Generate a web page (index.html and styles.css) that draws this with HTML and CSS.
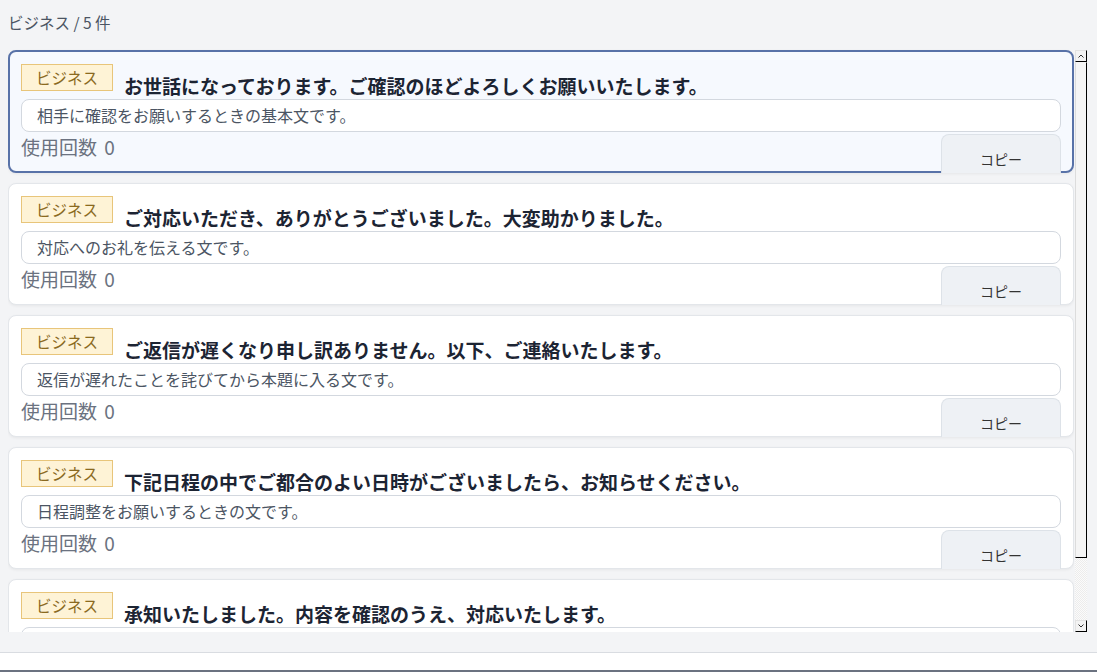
FILE: index.html
```html
<!doctype html>
<html lang="ja">
<head>
  <meta charset="UTF-8">
  <meta name="viewport" content="width=device-width, initial-scale=1.0">
  <title>テンプレート一覧</title>
  <link rel="stylesheet" href="styles.css">
</head>
<body>
  <div class="page">
    <div class="crumb">ビジネス / 5 件</div>

    <div class="viewport">
      <div class="list">
        <div class="card card-active">
          <div class="card-head">
            <span class="tag">ビジネス</span>
            <h3 class="title">お世話になっております。ご確認のほどよろしくお願いいたします。</h3>
          </div>
          <div class="note">相手に確認をお願いするときの基本文です。</div>
          <div class="card-foot">
            <span class="count">使用回数 0</span>
            <button class="copy">コピー</button>
          </div>
        </div>

        <div class="card">
          <div class="card-head">
            <span class="tag">ビジネス</span>
            <h3 class="title">ご対応いただき、ありがとうございました。大変助かりました。</h3>
          </div>
          <div class="note">対応へのお礼を伝える文です。</div>
          <div class="card-foot">
            <span class="count">使用回数 0</span>
            <button class="copy">コピー</button>
          </div>
        </div>

        <div class="card">
          <div class="card-head">
            <span class="tag">ビジネス</span>
            <h3 class="title">ご返信が遅くなり申し訳ありません。以下、ご連絡いたします。</h3>
          </div>
          <div class="note">返信が遅れたことを詫びてから本題に入る文です。</div>
          <div class="card-foot">
            <span class="count">使用回数 0</span>
            <button class="copy">コピー</button>
          </div>
        </div>

        <div class="card">
          <div class="card-head">
            <span class="tag">ビジネス</span>
            <h3 class="title">下記日程の中でご都合のよい日時がございましたら、お知らせください。</h3>
          </div>
          <div class="note">日程調整をお願いするときの文です。</div>
          <div class="card-foot">
            <span class="count">使用回数 0</span>
            <button class="copy">コピー</button>
          </div>
        </div>

        <div class="card">
          <div class="card-head">
            <span class="tag">ビジネス</span>
            <h3 class="title">承知いたしました。内容を確認のうえ、対応いたします。</h3>
          </div>
          <div class="note"></div>
        </div>
      </div>

      <!-- drawn scrollbar, list is scrolled to the top -->
      <div class="scrollbar">
        <div class="sb-btn">
          <svg width="6" height="4" viewBox="0 0 6 4"><path d="M0.5 3.5 L3 1 L5.5 3.5" fill="none" stroke="#333" stroke-width="1"/></svg>
        </div>
        <div class="sb-thumb"></div>
        <div class="sb-track"></div>
        <div class="sb-btn">
          <svg width="6" height="4" viewBox="0 0 6 4"><path d="M0.5 0.5 L3 3 L5.5 0.5" fill="none" stroke="#333" stroke-width="1"/></svg>
        </div>
      </div>
    </div>

    <div class="footer"></div>
  </div>
</body>
</html>
```

FILE: styles.css
```css
* {
  box-sizing: border-box;
}

body {
  margin: 0;
  background: #f3f4f6;
  font-family: "Noto Sans CJK JP", "Noto Sans", sans-serif;
  color: #1f2937;
}

.page {
  height: 100vh;
  display: flex;
  flex-direction: column;
  overflow: hidden;
}

.crumb {
  height: 49px;
  padding: 12px 0 0 8px;
  font-size: 15.5px;
  line-height: 20px;
  color: #4b5563;
  flex-shrink: 0;
}

.viewport {
  flex: 1;
  min-height: 0;
  display: flex;
  margin: 0 10px 0 8px;
}

.list {
  flex: 1;
  min-width: 0;
  padding-top: 1px;
  overflow: hidden;
  display: flex;
  flex-direction: column;
  gap: 10px;
}

.scrollbar {
  width: 13px;
  flex-shrink: 0;
  margin-top: 1px;
  padding-left: 1px;
  display: flex;
  flex-direction: column;
}

.sb-btn {
  height: 12px;
  flex-shrink: 0;
  display: flex;
  align-items: center;
  justify-content: center;
  background: #f3f3f3;
  border: 1px solid;
  border-color: #e2e2e2 #000 #000 #e2e2e2;
}

.sb-thumb {
  height: 496px;
  flex-shrink: 0;
  background: #f5f5f5;
  border: 1px solid;
  border-color: #f5f5f5 #000 #000 #dcdcdc;
}

.sb-track {
  flex: 1;
  background: repeating-conic-gradient(#ececec 0 25%, #fbfbfb 0 50%) 0 0 / 2px 2px;
}

.card {
  flex-shrink: 0;
  background: #fff;
  border: 1px solid #e3e6ea;
  border-radius: 8px;
  padding: 12px 12px 0;
  box-shadow: 0 1px 3px rgba(0, 0, 0, 0.06);
}

.card-active {
  background: #f6f9fe;
  border: 2px solid #5872a8;
  padding: 12px 11px 0;
}

.card-head {
  display: flex;
  align-items: flex-end;
  gap: 11px;
  height: 35px;
}

.tag {
  flex-shrink: 0;
  width: 92px;
  height: 27px;
  margin-bottom: 8px;
  background: #fef3d6;
  border: 1px solid #e8c57a;
  color: #8a6a1f;
  font-size: 15.5px;
  line-height: 25px;
  text-align: center;
}

.title {
  margin: 0;
  font-size: 19px;
  font-weight: 700;
  line-height: 26px;
  color: #1c2433;
  white-space: nowrap;
}

.note {
  height: 33px;
  background: #fff;
  border: 1px solid #d3d8df;
  border-radius: 8px;
  padding: 0 15px;
  font-size: 16px;
  line-height: 31px;
  color: #4b5563;
}

.card-foot {
  display: flex;
  justify-content: space-between;
  align-items: flex-start;
  margin-top: 2px;
}

.count {
  font-size: 19px;
  line-height: 26px;
  word-spacing: 3px;
  color: #6b7280;
}

.copy {
  width: 120px;
  height: 39px;
  margin-bottom: -1px;
  padding: 9px 0 0;
  background: #eef1f5;
  border: 1px solid #dde2e8;
  border-bottom: none;
  border-radius: 8px 8px 0 0;
  font-family: "Noto Sans CJK JP", sans-serif;
  font-size: 14px;
  line-height: 20px;
  color: #333;
  cursor: pointer;
}

.card-active .copy {
  margin-bottom: -2px;
}

.footer {
  flex-shrink: 0;
  height: 20px;
  margin-top: 20px;
  background: #fff;
  border-top: 1px solid #d9dce1;
  border-bottom: 2px solid #6b7280;
}
```
